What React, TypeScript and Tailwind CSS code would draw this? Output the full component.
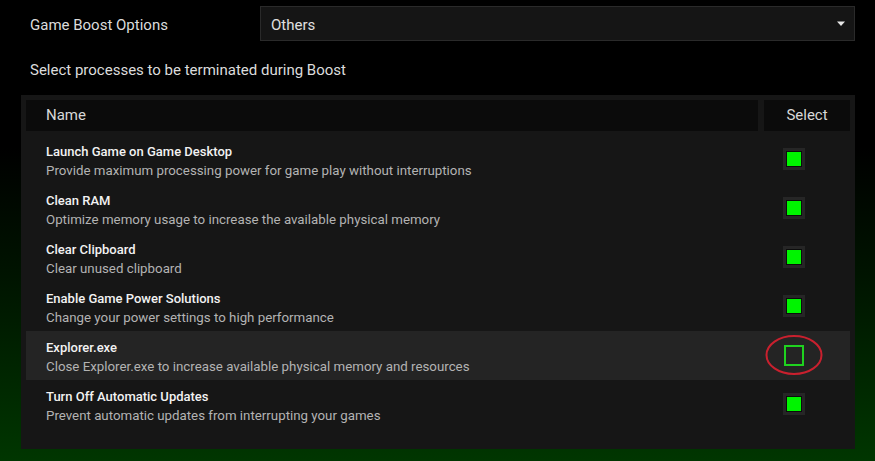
import React from "react";

type Process = {
  title: string;
  desc: string;
  checked: boolean;
  highlight?: boolean;
};

const processes: Process[] = [
  { title: "Launch Game on Game Desktop", desc: "Provide maximum processing power for game play without interruptions", checked: true },
  { title: "Clean RAM", desc: "Optimize memory usage to increase the available physical memory", checked: true },
  { title: "Clear Clipboard", desc: "Clear unused clipboard", checked: true },
  { title: "Enable Game Power Solutions", desc: "Change your power settings to high performance", checked: true },
  { title: "Explorer.exe", desc: "Close Explorer.exe to increase available physical memory and resources", checked: false, highlight: true },
  { title: "Turn Off Automatic Updates", desc: "Prevent automatic updates from interrupting your games", checked: true },
];

const CheckBox = ({ checked, marked }: { checked: boolean; marked?: boolean }) => (
  <div className="relative w-[22px] h-[22px] flex items-center justify-center">
    {checked ? (
      <div className="w-[22px] h-[22px] bg-[#262626] flex items-center justify-center">
        <div className="w-[16px] h-[16px] bg-[#0c0c0c] flex items-center justify-center">
          <div className="w-[14px] h-[14px] bg-[#00f400]" />
        </div>
      </div>
    ) : (
      <div className="w-[20px] h-[21px] border-2 border-[#1fd21f]" />
    )}
    {marked && (
      <svg className="absolute left-[-18px] top-[-11px]" width="58" height="44" viewBox="0 0 58 44">
        <ellipse cx="29" cy="22" rx="27.5" ry="19" fill="none" stroke="#c9202e" strokeWidth="2" />
      </svg>
    )}
  </div>
);

const Row = ({ p }: { p: Process }) => (
  <div className={"flex h-[49px] " + (p.highlight ? "bg-[#242424]" : "")}>
    <div className="flex-1 pl-[20px] pt-[7px]">
      <div className="text-[13px] leading-[19px] font-medium text-[#f2f2f2]">{p.title}</div>
      <div className="text-[13.3px] leading-[19px] text-[#b3b3b3]">{p.desc}</div>
    </div>
    <div className="w-[92px] pl-[25px] pt-[13px]">
      <CheckBox checked={p.checked} marked={p.highlight} />
    </div>
  </div>
);

export default function App() {
  return (
    <div
      className="w-[875px] h-[461px] overflow-hidden bg-[linear-gradient(to_bottom,#000_0%,#000_32%,#001400_60%,#003600_100%)] text-[#dcdcdc]"
      style={{ fontFamily: "Roboto, 'Open Sans', sans-serif" }}
    >
      <div className="flex items-center pt-[6px]">
        <div className="w-[260px] pl-[30px] pt-[3px] text-[15px]">Game Boost Options</div>
        <div className="w-[595px] h-[35px] bg-[#151515] border border-[#2a2a2a] flex items-center justify-between pl-[10px] pr-[8px]">
          <span className="text-[15px] pt-[3px] text-[#e0e0e0]">Others</span>
          <svg width="10" height="6" viewBox="0 0 10 6">
            <path d="M1 0.5 L9 0.5 L5 5 Z" fill="#e6e6e6" />
          </svg>
        </div>
      </div>

      <div className="pl-[30px] mt-[19px] text-[15px] leading-[20px]">Select processes to be terminated during Boost</div>

      <div className="ml-[21px] mt-[15px] w-[834px] h-[354px] bg-[#161616] p-[5px]">
        <div className="flex gap-[6px] h-[31px]">
          <div className="flex-1 bg-[#0b0b0b] pl-[20px] flex items-center text-[15px] text-[#d8d8d8]">Name</div>
          <div className="w-[86px] bg-[#0b0b0b] flex items-center justify-center text-[15px] text-[#d8d8d8]">Select</div>
        </div>
        <div className="mt-[4px]">
          {processes.map((p) => (
            <Row key={p.title} p={p} />
          ))}
        </div>
      </div>
    </div>
  );
}
